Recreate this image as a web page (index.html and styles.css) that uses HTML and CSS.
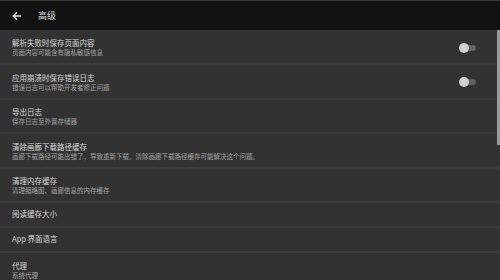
FILE: index.html
```html
<!DOCTYPE html>
<html>
    <head>
        <meta charset="utf-8">
        <meta name="viewport" content="width=device-width, initial-scale=1.0">
        <title>高级</title>
        <link rel="stylesheet" href="styles.css">
    </head>
    <body>
        <div class="bar">
            <svg class="back" width="10" height="10" viewBox="0 0 10 10">
                <path d="M9 5H1.5M5 1.3L1.3 5L5 8.7" fill="none" stroke="#e6e6e6" stroke-width="1.5"/>
            </svg>
            <span class="bar-title">高级</span>
        </div>
        <div class="list">
            <div class="item first">
                <div class="text">
                    <div class="title">解析失败时保存页面内容</div>
                    <div class="sub">页面内容可能含有隐私敏感信息</div>
                </div>
                <div class="switch"><span class="knob"></span></div>
            </div>
            <div class="item">
                <div class="text">
                    <div class="title">应用崩溃时保存错误日志</div>
                    <div class="sub">错误日志可以帮助开发者修正问题</div>
                </div>
                <div class="switch"><span class="knob"></span></div>
            </div>
            <div class="item">
                <div class="text">
                    <div class="title">导出日志</div>
                    <div class="sub">保存日志至外置存储器</div>
                </div>
            </div>
            <div class="item">
                <div class="text">
                    <div class="title">清除画廊下载路径缓存</div>
                    <div class="sub">画廊下载路径可能出错了，导致重新下载。清除画廊下载路径缓存可能解决这个问题。</div>
                </div>
            </div>
            <div class="item">
                <div class="text">
                    <div class="title">清理内存缓存</div>
                    <div class="sub">清理缩略图、画廊信息的内存缓存</div>
                </div>
            </div>
            <div class="item single">
                <div class="title">阅读缓存大小</div>
            </div>
            <div class="item single">
                <div class="title">App 界面语言</div>
            </div>
            <div class="item">
                <div class="text">
                    <div class="title">代理</div>
                    <div class="sub">系统代理</div>
                </div>
            </div>
        </div>
        <div class="scroll"></div>
    </body>
</html>
```
FILE: styles.css
```css
html, body{
    margin: 0;
    height: 100%;
    overflow: hidden;
}
body{
    background: #323232;
    font-family: "Noto Sans CJK SC", "Noto Sans", sans-serif;
    position: relative;
}
.bar{
    height: 29px;
    border-top: 1px solid #3a3a3a;
    background: #121212;
    display: flex;
    align-items: center;
    padding-left: 12px;
}
.back{
    display: block;
}
.bar-title{
    margin-left: 16px;
    font-size: 9px;
    line-height: 10px;
    color: #dcdcdc;
}
.item{
    display: flex;
    align-items: center;
    padding: 7.5px 12px 6px;
    height: 19px;
    border-bottom: 2px solid #3c3c3c;
    box-sizing: content-box;
}
.item.first{
    padding-top: 8px;
}
.item.single{
    padding: 6px 12px 7px;
    height: 10px;
}
.text{
    flex: 1;
    min-width: 0;
}
.title{
    font-size: 7.5px;
    line-height: 10px;
    color: #dadada;
    white-space: nowrap;
}
.sub{
    font-size: 6.5px;
    line-height: 9px;
    color: #a4a4a4;
    white-space: nowrap;
}
.switch{
    position: relative;
    width: 16px;
    height: 6px;
    border-radius: 3px;
    background: #606060;
    margin-right: 12px;
}
.knob{
    position: absolute;
    left: 0;
    top: -2px;
    width: 10px;
    height: 10px;
    margin-left: -1px;
    border-radius: 50%;
    background: #cfcfcf;
}
.scroll{
    position: absolute;
    right: 0;
    top: 30px;
    width: 3px;
    height: 115px;
    background: #9a9a9a;
}
```
